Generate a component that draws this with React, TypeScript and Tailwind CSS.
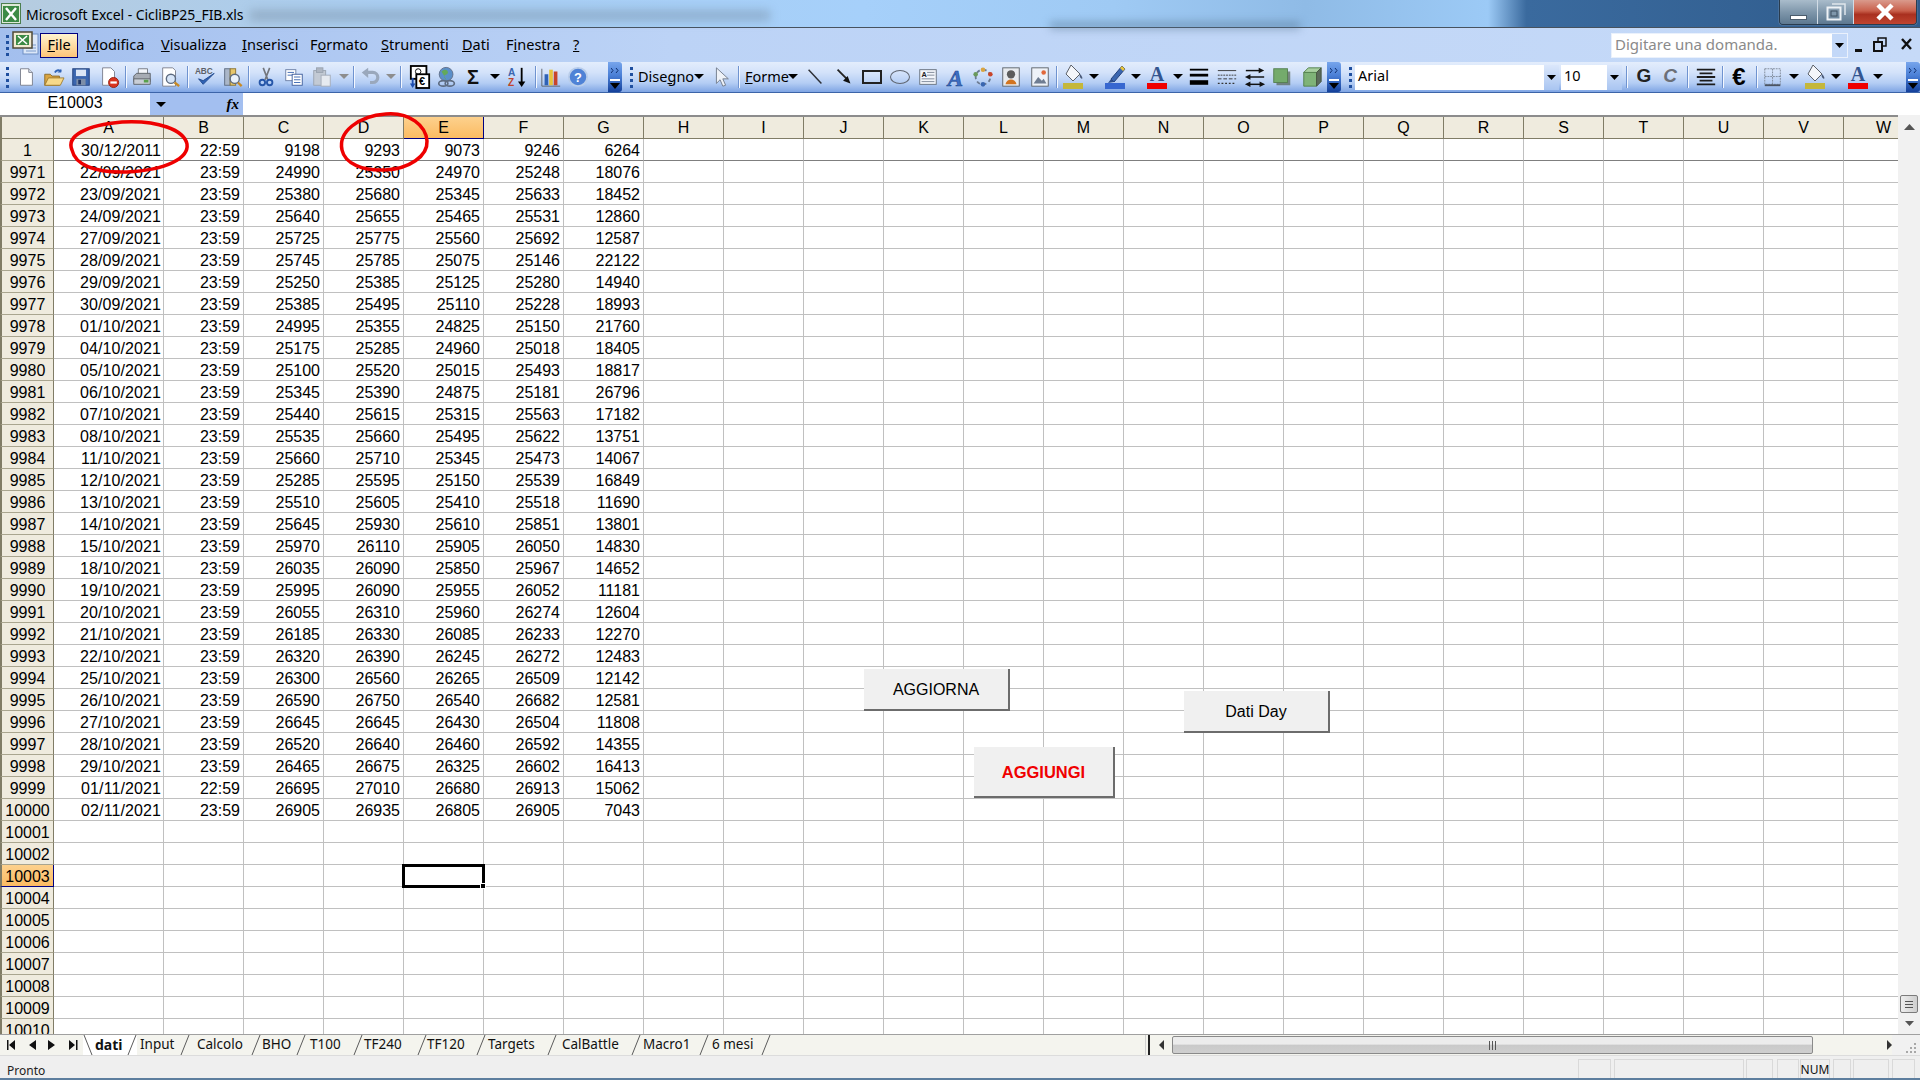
import type { ReactNode } from "react";

const ui = "font-['Noto_Sans',sans-serif]";

type Row = [string, string, string, string, string, string, string, string];

const rows: Row[] = [
  ["9971", "22/09/2021", "23:59", "24990", "25350", "24970", "25248", "18076"],
  ["9972", "23/09/2021", "23:59", "25380", "25680", "25345", "25633", "18452"],
  ["9973", "24/09/2021", "23:59", "25640", "25655", "25465", "25531", "12860"],
  ["9974", "27/09/2021", "23:59", "25725", "25775", "25560", "25692", "12587"],
  ["9975", "28/09/2021", "23:59", "25745", "25785", "25075", "25146", "22122"],
  ["9976", "29/09/2021", "23:59", "25250", "25385", "25125", "25280", "14940"],
  ["9977", "30/09/2021", "23:59", "25385", "25495", "25110", "25228", "18993"],
  ["9978", "01/10/2021", "23:59", "24995", "25355", "24825", "25150", "21760"],
  ["9979", "04/10/2021", "23:59", "25175", "25285", "24960", "25018", "18405"],
  ["9980", "05/10/2021", "23:59", "25100", "25520", "25015", "25493", "18817"],
  ["9981", "06/10/2021", "23:59", "25345", "25390", "24875", "25181", "26796"],
  ["9982", "07/10/2021", "23:59", "25440", "25615", "25315", "25563", "17182"],
  ["9983", "08/10/2021", "23:59", "25535", "25660", "25495", "25622", "13751"],
  ["9984", "11/10/2021", "23:59", "25660", "25710", "25345", "25473", "14067"],
  ["9985", "12/10/2021", "23:59", "25285", "25595", "25150", "25539", "16849"],
  ["9986", "13/10/2021", "23:59", "25510", "25605", "25410", "25518", "11690"],
  ["9987", "14/10/2021", "23:59", "25645", "25930", "25610", "25851", "13801"],
  ["9988", "15/10/2021", "23:59", "25970", "26110", "25905", "26050", "14830"],
  ["9989", "18/10/2021", "23:59", "26035", "26090", "25850", "25967", "14652"],
  ["9990", "19/10/2021", "23:59", "25995", "26090", "25955", "26052", "11181"],
  ["9991", "20/10/2021", "23:59", "26055", "26310", "25960", "26274", "12604"],
  ["9992", "21/10/2021", "23:59", "26185", "26330", "26085", "26233", "12270"],
  ["9993", "22/10/2021", "23:59", "26320", "26390", "26245", "26272", "12483"],
  ["9994", "25/10/2021", "23:59", "26300", "26560", "26265", "26509", "12142"],
  ["9995", "26/10/2021", "23:59", "26590", "26750", "26540", "26682", "12581"],
  ["9996", "27/10/2021", "23:59", "26645", "26645", "26430", "26504", "11808"],
  ["9997", "28/10/2021", "23:59", "26520", "26640", "26460", "26592", "14355"],
  ["9998", "29/10/2021", "23:59", "26465", "26675", "26325", "26602", "16413"],
  ["9999", "01/11/2021", "22:59", "26695", "27010", "26680", "26913", "15062"],
  ["10000", "02/11/2021", "23:59", "26905", "26935", "26805", "26905", "7043"],
];

const columns = "ABCDEFGHIJKLMNOPQRSTUVW".split("");
const emptyRows = ["10001", "10002", "10003", "10004", "10005", "10006", "10007", "10008", "10009", "10010"];

const menus = [
  { label: "File", u: 0, cls: "w-[38px] ml-[1px] justify-center h-[25px] border border-[#000080] bg-[linear-gradient(180deg,#fff4cf,#fdc478)]" },
  { label: "Modifica", u: 0, cls: "w-[75px] ml-[8px]" },
  { label: "Visualizza", u: 0, cls: "w-[81px]" },
  { label: "Inserisci", u: 0, cls: "w-[68px]" },
  { label: "Formato", u: 1, cls: "w-[71px]" },
  { label: "Strumenti", u: 0, cls: "w-[81px]" },
  { label: "Dati", u: 0, cls: "w-[44px]" },
  { label: "Finestra", u: 1, cls: "w-[67px]" },
  { label: "?", u: 0, cls: "w-[14px]" },
];

const tabs = [
  { label: "Input", cls: "w-[43px] pl-[3px]" },
  { label: "Calcolo", cls: "w-[61px] pl-[7px]" },
  { label: "BHO", cls: "w-[35px] pl-[1px]" },
  { label: "T100", cls: "w-[47px] pl-[4px]" },
  { label: "TF240", cls: "w-[54px] pl-[1px]" },
  { label: "TF120", cls: "w-[49px]" },
  { label: "Targets", cls: "w-[61px] pl-[2px]" },
  { label: "CalBattle", cls: "w-[74px] pl-[5px]" },
  { label: "Macro1", cls: "w-[58px] pl-[2px]" },
  { label: "6 mesi", cls: "w-[52px] pl-[3px]" },
];

const panes = [
  "w-[33px] ml-[1578px]",
  "w-[130px] ml-[3px]",
  "w-[27px] ml-[2px]",
  "w-[22px] ml-[4px]",
  "w-[30px] ml-[1px]",
  "w-[18px] ml-[3px]",
  "w-[36px] ml-[2px]",
  "w-[23px] ml-[3px]",
];

function Ico({ children, w = 22, h = 22 }: { children: ReactNode; w?: number; h?: number }) {
  return (
    <svg width={w} height={h} viewBox={`0 0 ${w === 22 ? 24 : w} ${h === 22 ? 24 : h}`} className="shrink-0 overflow-visible">
      {children}
    </svg>
  );
}

function Slot({ className, children }: { className: string; children?: ReactNode }) {
  return <div className={`flex h-full shrink-0 items-center justify-center pb-[1px] ${className}`}>{children}</div>;
}

function Sep({ className }: { className: string }) {
  return (
    <Slot className={className}>
      <div className="h-[22px] w-[2px] border-l border-r border-l-[#6f93d0] border-r-[#f4f8ff]" />
    </Slot>
  );
}

function Dd({ className, gray }: { className: string; gray?: boolean }) {
  return (
    <Slot className={className}>
      <svg width="10" height="5" viewBox="0 0 10 5">
        <path d="M0 0h10L5 5z" fill={gray ? "#8d8d8d" : "#000"} />
      </svg>
    </Slot>
  );
}

function Grip() {
  return (
    <div className="flex h-full w-[10px] shrink-0 flex-col items-center justify-center gap-[3px]">
      <div className="h-[3px] w-[3px] bg-[#1f4f9f]" />
      <div className="h-[3px] w-[3px] bg-[#1f4f9f]" />
      <div className="h-[3px] w-[3px] bg-[#1f4f9f]" />
      <div className="h-[3px] w-[3px] bg-[#1f4f9f]" />
    </div>
  );
}

function Chevron({ className = "" }: { className?: string }) {
  return (
    <div className={`flex h-full w-[14px] shrink-0 flex-col items-center rounded-r-[3px] bg-[linear-gradient(180deg,#77a5ec,#4a7fd6_45%,#14409a)] pt-[6px] ${className}`}>
      <svg width="9" height="5" viewBox="0 0 9 5">
        <path d="M0 0l2 2.5L0 5M5 0l2 2.5L5 5" stroke="#10306f" fill="none" />
      </svg>
      <div className="mt-[6px] h-[2px] w-[10px] bg-white" />
      <svg width="10" height="6" viewBox="0 0 10 6" className="mt-[2px]">
        <path d="M0 0h10L5 6z" fill="#000" />
      </svg>
    </div>
  );
}

function NewDoc() {
  return (
    <Ico>
      <path d="M6 3h9l4 4v14H6z" fill="#fff" stroke="#7b7f8c" />
      <path d="M15 3v4h4" fill="#dde4ee" stroke="#7b7f8c" />
    </Ico>
  );
}
function OpenFolder() {
  return (
    <Ico>
      <path d="M3 9h6l2 2h8v10H3z" fill="#d9a441" stroke="#8c6a26" />
      <path d="M3 21l4-8h17l-4 8z" fill="#f7d98a" stroke="#a07d30" />
      <path d="M14 7c2-3 5-3 7-1" stroke="#2f62b5" strokeWidth="2" fill="none" />
      <path d="M21 3v4h-4" fill="#2f62b5" />
    </Ico>
  );
}
function Save() {
  return (
    <Ico>
      <rect x="3" y="3" width="18" height="18" fill="#3b66ae" stroke="#24427c" />
      <rect x="6.5" y="4" width="11" height="7" fill="#dce6f5" />
      <rect x="7" y="14" width="10" height="7" fill="#7d8ea8" />
      <rect x="9" y="15" width="3" height="5" fill="#1f3564" />
    </Ico>
  );
}
function PermDoc() {
  return (
    <Ico>
      <path d="M5 2h9l4 4v15H5z" fill="#fff" stroke="#7b7f8c" />
      <circle cx="17" cy="18" r="5.5" fill="#d9341f" stroke="#96200f" />
      <rect x="13.5" y="16.8" width="7" height="2.4" fill="#fff" />
    </Ico>
  );
}
function Printer() {
  return (
    <Ico>
      <path d="M8 3h10v7H8z" fill="#f4f6fa" stroke="#72777f" />
      <path d="M3 11l3-3h15v9H3z" fill="#a7acb4" stroke="#5c6168" />
      <path d="M3 14h18v6H3z" fill="#c9ced6" stroke="#5c6168" />
      <rect x="14" y="15" width="5" height="3" fill="#58a04c" />
    </Ico>
  );
}
function Preview() {
  return (
    <Ico>
      <path d="M4 2h11l3 3v17H4z" fill="#fff" stroke="#7b7f8c" />
      <circle cx="13" cy="14" r="5" fill="#d8e6f8" stroke="#5d6b80" strokeWidth="1.5" />
      <path d="M17 18l5 4" stroke="#c98a24" strokeWidth="2.5" />
    </Ico>
  );
}
function Spell() {
  return (
    <Ico>
      <text x="1" y="9" fontSize="9" fontWeight="700" fill="#5c6168" fontFamily="Liberation Sans">ABC</text>
      <path d="M5 14l5 6L22 8l-12 8z" fill="#2f62b5" stroke="#1e468c" strokeWidth="1" />
    </Ico>
  );
}
function Research() {
  return (
    <Ico>
      <rect x="4" y="3" width="6" height="18" fill="#aab6c8" stroke="#5d6b80" />
      <rect x="10" y="3" width="6" height="18" fill="#e6c66c" stroke="#8c7430" />
      <circle cx="15" cy="14" r="5" fill="#eaf2fc" stroke="#5d6b80" strokeWidth="1.5" />
      <path d="M18.5 18l4 4" stroke="#c98a24" strokeWidth="2.5" />
    </Ico>
  );
}
function Cut() {
  return (
    <Ico>
      <path d="M9 2l5 13M16 2l-5 13" stroke="#73767c" strokeWidth="1.8" />
      <circle cx="8" cy="18" r="3" fill="none" stroke="#2656a8" strokeWidth="2" />
      <circle cx="16" cy="18" r="3" fill="none" stroke="#2656a8" strokeWidth="2" />
    </Ico>
  );
}
function Copy() {
  return (
    <Ico>
      <rect x="3" y="4" width="11" height="12" fill="#fff" stroke="#6b7fa6" />
      <path d="M5 7h7M5 10h7" stroke="#3a66b0" />
      <rect x="10" y="9" width="11" height="12" fill="#fff" stroke="#3f5e9c" />
      <path d="M12 12h7M12 15h7M12 18h7" stroke="#3a66b0" />
    </Ico>
  );
}
function Paste() {
  return (
    <Ico>
      <rect x="3" y="5" width="13" height="16" fill="#c3cad4" stroke="#9aa3b0" />
      <rect x="6" y="2" width="7" height="5" fill="#aeb6c2" stroke="#9aa3b0" />
      <rect x="11" y="10" width="10" height="12" fill="#e6eaf0" stroke="#a5adb9" />
    </Ico>
  );
}
function Undo() {
  return (
    <Ico>
      <path d="M9 7h6a5 5 0 0 1 0 11h-3" stroke="#9aa8bc" strokeWidth="3.500" fill="none" />
      <path d="M10 2v11L3 7z" fill="#9aa8bc" />
    </Ico>
  );
}
function EuroConv() {
  return (
    <Ico w={22} h={26}>
      <rect x="2" y="1" width="17" height="14" fill="#fff" stroke="#000" strokeWidth="2" />
      <circle cx="10" cy="7" r="3" fill="none" stroke="#000" />
      <rect x="8" y="10" width="14" height="15" fill="#fff" stroke="#000" strokeWidth="2" />
      <text x="11" y="22" fontSize="12" fontWeight="700" fill="#000" fontFamily="Liberation Sans">€</text>
      <path d="M4 14v9" stroke="#1f4fb0" strokeWidth="2" />
      <path d="M1 20h6l-3 5z" fill="#1f4fb0" />
    </Ico>
  );
}
function Link() {
  return (
    <Ico>
      <circle cx="11" cy="9" r="7.5" fill="#5b8fc9" stroke="#627089" />
      <path d="M6 6c3-3 7-2 7 1s-5 2-4 5 3 3 3 4" fill="#63a95a" />
      <ellipse cx="8" cy="19" rx="5" ry="3" fill="none" stroke="#5d6b80" strokeWidth="1.8" />
      <ellipse cx="15" cy="19" rx="5" ry="3" fill="none" stroke="#5d6b80" strokeWidth="1.8" />
    </Ico>
  );
}
function Sort() {
  return (
    <Ico>
      <text x="1" y="11" fontSize="11" fontWeight="700" fill="#3a66b0" fontFamily="Liberation Sans">A</text>
      <text x="1" y="22" fontSize="11" fontWeight="700" fill="#c0452b" fontFamily="Liberation Sans">Z</text>
      <path d="M16 2v16" stroke="#000" strokeWidth="2" />
      <path d="M12 17h8l-4 6z" fill="#000" />
    </Ico>
  );
}
function Chart() {
  return (
    <Ico>
      <path d="M2 3v19h20" fill="none" stroke="#5c6168" />
      <rect x="5" y="9" width="4" height="12" fill="#2f62b5" />
      <rect x="10" y="4" width="4" height="17" fill="#e8c33c" />
      <rect x="15" y="6" width="4" height="15" fill="#c8452a" />
    </Ico>
  );
}
function Help() {
  return (
    <Ico>
      <circle cx="12" cy="12" r="10" fill="#4f82d6" stroke="#b9cdea" strokeWidth="2" />
      <text x="12" y="17" fontSize="14" fontWeight="700" fill="#fff" textAnchor="middle" fontFamily="Liberation Sans">?</text>
    </Ico>
  );
}
function Cursor() {
  return (
    <Ico>
      <path d="M7 2v17l4-4 3 7 3-1-3-7h6z" fill="#eef2f8" stroke="#707a8a" />
    </Ico>
  );
}
function LineIco() {
  return (
    <Ico>
      <path d="M5 4l14 15" stroke="#2c2f35" strokeWidth="1.6" />
    </Ico>
  );
}
function ArrowIco() {
  return (
    <Ico>
      <path d="M5 4l10 10" stroke="#222" strokeWidth="2" />
      <path d="M19 19l-8-3 5-5z" fill="#111" />
    </Ico>
  );
}
function TextBox() {
  return (
    <Ico>
      <rect x="3" y="4" width="18" height="16" fill="#f2f5fa" stroke="#66707e" />
      <text x="5" y="12" fontSize="8" fontWeight="700" fill="#222" fontFamily="Liberation Sans">A</text>
      <path d="M11 7h8M11 10h8M5 14h14M5 17h14" stroke="#7d8796" />
    </Ico>
  );
}
function WordArt() {
  return (
    <Ico>
      <text x="2" y="22" fontSize="25" fontWeight="700" fontStyle="italic" fill="#3d6fc4" stroke="#1e468c" strokeWidth="0.6" fontFamily="Liberation Serif">A</text>
    </Ico>
  );
}
function Diagram() {
  return (
    <Ico>
      <path d="M12 4a8 8 0 1 1-.1 0" fill="none" stroke="#6b7a90" strokeWidth="2" strokeDasharray="4 3" />
      <circle cx="12" cy="4" r="2.500" fill="#d9a441" />
      <circle cx="20" cy="9" r="2.500" fill="#c8452a" />
      <circle cx="12" cy="20" r="2.500" fill="#3a66b0" />
      <circle cx="4" cy="9" r="2.500" fill="#6a9a5c" />
    </Ico>
  );
}
function ClipArt() {
  return (
    <Ico>
      <rect x="3" y="2" width="18" height="20" fill="#e8ebef" stroke="#5c6168" />
      <circle cx="12" cy="9" r="4.500" fill="#5c5c5c" />
      <path d="M6 20c1-7 11-7 12 0z" fill="#d2741f" />
    </Ico>
  );
}
function PictureIco() {
  return (
    <Ico>
      <rect x="3" y="2" width="18" height="20" fill="#eef2f8" stroke="#5c6168" />
      <path d="M5 19l5-7 4 4 2-2 3 5z" fill="#6f7d92" />
      <circle cx="16" cy="7" r="2.500" fill="#e2683a" />
    </Ico>
  );
}
function Fill() {
  return (
    <Ico w={24} h={26}>
      <path d="M10 1l9 9-7 7-7-7z" fill="#f4f6fa" stroke="#5c6168" />
      <path d="M19 10c2 2 3 4 2 5-2-1-3-3-2-5z" fill="#4a5a78" />
      <rect x="2" y="19" width="20" height="6" fill="#c4b73c" />
    </Ico>
  );
}
function Pen() {
  return (
    <Ico w={24} h={26}>
      <path d="M8 15L19 2l3 3L11 18z" fill="#3a66b0" stroke="#24427c" />
      <path d="M19 2l3 3-2 2-3-3z" fill="#e8c33c" />
      <path d="M8 15l3 3-6 1z" fill="#2f4f8c" />
      <rect x="2" y="19" width="20" height="6" fill="#3767d0" />
    </Ico>
  );
}
function FontColor() {
  return (
    <Ico w={24} h={26}>
      <text x="12" y="17" fontSize="20" fontWeight="700" fill="#33558f" textAnchor="middle" fontFamily="Liberation Serif">A</text>
      <rect x="2" y="19" width="20" height="6" fill="#f00000" />
    </Ico>
  );
}
function Lines() {
  return (
    <Ico>
      <path d="M2 4h20" stroke="#000" strokeWidth="2" />
      <path d="M2 10h20" stroke="#000" strokeWidth="3" />
      <path d="M2 18h20" stroke="#000" strokeWidth="5" />
    </Ico>
  );
}
function Dashes() {
  return (
    <Ico>
      <path d="M2 5h20" stroke="#333" />
      <path d="M2 10h20" stroke="#333" strokeDasharray="2 1" />
      <path d="M2 14h20" stroke="#333" strokeDasharray="4 2" />
      <path d="M2 19h20" stroke="#333" strokeWidth="1.5" strokeDasharray="2 2" />
    </Ico>
  );
}
function Arrows() {
  return (
    <Ico>
      <path d="M2 5h16" stroke="#111" strokeWidth="1.6" />
      <path d="M22 5l-6-3v6z" fill="#111" />
      <path d="M4 12h18" stroke="#111" strokeWidth="1.6" />
      <path d="M1 12l6-3v6z" fill="#111" />
      <path d="M5 20h14" stroke="#111" strokeWidth="1.6" />
      <path d="M1 20l6-3v6zM23 20l-6-3v6z" fill="#111" />
    </Ico>
  );
}
function Shadow() {
  return (
    <Ico>
      <rect x="6" y="6" width="15" height="15" fill="#5b6a5b" opacity="0.75" />
      <rect x="3" y="3" width="15" height="15" fill="#74ab6c" stroke="#557f50" />
    </Ico>
  );
}
function Cube() {
  return (
    <Ico>
      <path d="M3 7h14v15H3z" fill="#7fb378" stroke="#51804c" />
      <path d="M3 7l5-5h14l-5 5z" fill="#a8cfa0" stroke="#51804c" />
      <path d="M17 7l5-5v15l-5 5z" fill="#5b6a5b" stroke="#45543f" />
    </Ico>
  );
}
function BoldG() {
  return <span className="font-['Liberation_Sans',sans-serif] text-[19px] font-bold text-[#222]">G</span>;
}
function ItalicC() {
  return <span className="font-['Liberation_Sans',sans-serif] text-[19px] font-bold italic text-[#6b6f78]">C</span>;
}
function Align() {
  return (
    <Ico>
      <path d="M2 4h20M5 8h14M2 12h20M5 16h14M2 20h20" stroke="#1c1c1c" strokeWidth="2" />
    </Ico>
  );
}
function Euro() {
  return <span className="font-['Liberation_Sans',sans-serif] text-[24px] font-bold leading-none text-black">€</span>;
}
function Borders() {
  return (
    <Ico>
      <rect x="3" y="3" width="17" height="17" fill="none" stroke="#7d8796" strokeDasharray="2 1" />
      <path d="M11.5 3v17M3 11.5h17" stroke="#7d8796" strokeDasharray="2 1" />
      <path d="M3 21h17" stroke="#4b5462" strokeWidth="2" />
    </Ico>
  );
}

function MainToolbar() {
  return (
    <div className="ml-[2px] flex h-full w-[620px] shrink-0 rounded-l-[3px]">
      <Grip />
      <Slot className="w-[27px]"><NewDoc /></Slot>
      <Slot className="w-[28px]"><OpenFolder /></Slot>
      <Slot className="w-[27px]"><Save /></Slot>
      <Slot className="w-[30px]"><PermDoc /></Slot>
      <Sep className="w-[4px]" />
      <Slot className="w-[28px]"><Printer /></Slot>
      <Slot className="w-[28px]"><Preview /></Slot>
      <Sep className="w-[8px]" />
      <Slot className="w-[26px]"><Spell /></Slot>
      <Slot className="w-[28px]"><Research /></Slot>
      <Sep className="w-[6px]" />
      <Slot className="w-[28px]"><Cut /></Slot>
      <Slot className="w-[28px]"><Copy /></Slot>
      <Slot className="w-[28px]"><Paste /></Slot>
      <Dd className="w-[16px]" gray />
      <Sep className="w-[4px]" />
      <Slot className="w-[28px]"><Undo /></Slot>
      <Dd className="w-[14px]" gray />
      <Sep className="w-[6px]" />
      <Slot className="w-[32px]"><EuroConv /></Slot>
      <Slot className="w-[22px]"><Link /></Slot>
      <Slot className="w-[30px] font-['Liberation_Sans',sans-serif] text-[20px] font-bold text-[#111]">Σ</Slot>
      <Dd className="w-[14px]" />
      <Slot className="w-[32px]"><Sort /></Slot>
      <Sep className="w-[4px]" />
      <Slot className="w-[26px]"><Chart /></Slot>
      <Slot className="w-[28px]"><Help /></Slot>
      <div className="w-[16px] shrink-0" />
      <Chevron />
    </div>
  );
}

function DrawToolbar() {
  return (
    <div className={`ml-[4px] flex h-full w-[715px] shrink-0 rounded-l-[3px] ${ui}`}>
      <Grip />
      <Slot className="w-[58px] justify-start pl-[2px] text-[14.5px] text-black">
        <span>Dise<span className="underline">g</span>no</span>
      </Slot>
      <Dd className="w-[10px]" />
      <Slot className="w-[33px]"><Cursor /></Slot>
      <Sep className="w-[3px]" />
      <Slot className="w-[47px] justify-start pl-[5px] text-[14.5px] text-black">
        <span><span className="underline">F</span>orme</span>
      </Slot>
      <Dd className="w-[12px]" />
      <Slot className="w-[32px]"><LineIco /></Slot>
      <Slot className="w-[26px]"><ArrowIco /></Slot>
      <Slot className="w-[30px]"><div className="h-[14px] w-[20px] border-2 border-[#222] bg-white/10" /></Slot>
      <Slot className="w-[26px]"><div className="h-[14px] w-[20px] rounded-[50%] border-[1.5px] border-[#5f6570]" /></Slot>
      <Slot className="w-[30px]"><TextBox /></Slot>
      <Slot className="w-[27px]"><WordArt /></Slot>
      <Slot className="w-[26px]"><Diagram /></Slot>
      <Slot className="w-[30px]"><ClipArt /></Slot>
      <Slot className="w-[28px]"><PictureIco /></Slot>
      <Sep className="w-[6px]" />
      <Slot className="w-[26px]"><Fill /></Slot>
      <Dd className="w-[16px]" />
      <Slot className="w-[26px]"><Pen /></Slot>
      <Dd className="w-[16px]" />
      <Slot className="w-[26px]"><FontColor /></Slot>
      <Dd className="w-[16px]" />
      <Slot className="w-[26px]"><Lines /></Slot>
      <Slot className="w-[30px]"><Dashes /></Slot>
      <Slot className="w-[26px]"><Arrows /></Slot>
      <Slot className="w-[28px]"><Shadow /></Slot>
      <Slot className="w-[31px]"><Cube /></Slot>
      <Chevron />
    </div>
  );
}

function Combo({ className, children }: { className: string; children: ReactNode }) {
  return (
    <div className={`flex h-[25px] shrink-0 items-center bg-white ${className}`}>
      <span className="flex-1 pb-[3px] pl-[3px] text-[14.5px] text-black">{children}</span>
      <div className="flex h-full w-[15px] items-center justify-center bg-[linear-gradient(180deg,#dbe7fb,#a9c5f1)]">
        <svg width="9" height="5" viewBox="0 0 9 5">
          <path d="M0 0h9L4.5 5z" fill="#000" />
        </svg>
      </div>
    </div>
  );
}

function FormatToolbar() {
  return (
    <div className={`ml-[4px] flex h-full flex-1 items-center rounded-l-[3px] ${ui}`}>
      <Grip />
      <Combo className="w-[204px]">Arial</Combo>
      <Combo className="ml-[2px] w-[61px]">10</Combo>
      <Sep className="w-[10px]" />
      <Slot className="w-[24px]"><BoldG /></Slot>
      <Slot className="w-[28px]"><ItalicC /></Slot>
      <Sep className="w-[8px]" />
      <Slot className="w-[28px]"><Align /></Slot>
      <Sep className="w-[6px]" />
      <Slot className="w-[26px]"><Euro /></Slot>
      <Sep className="w-[10px]" />
      <Slot className="w-[22px]"><Borders /></Slot>
      <Dd className="w-[20px]" />
      <Slot className="w-[22px]"><Fill /></Slot>
      <Dd className="w-[20px]" />
      <Slot className="w-[24px]"><FontColor /></Slot>
      <Dd className="w-[16px]" />
      <div className="flex-1" />
      <Chevron />
    </div>
  );
}

function TitleBar() {
  return (
    <div className="relative flex h-[28px] shrink-0 items-center border-b border-[#47525e] bg-[linear-gradient(90deg,#b6ccdf_0,#a9cdf0_20%,#a6d0fa_45%,#9fcaf4_58%,#8fbbe6_68%,#9ccaf6_77.5%,#3a6a9e_79.5%,#2f5b8b_100%)]">
      <div className="absolute left-[250px] top-[10px] h-[11px] w-[520px] bg-[#6f8397]/40 blur-[5px]" />
      <div className="absolute left-[1050px] top-[22px] h-[7px] w-[250px] bg-[#4f6f8c]/50 blur-[4px]" />
      <div className="relative ml-[1px] flex h-[21px] w-[20px] items-center justify-center border border-[#4c7f4f] bg-[#dfe9d8]">
        <svg width="16" height="16" viewBox="0 0 16 16">
          <rect width="16" height="16" fill="#3c8a45" />
          <path d="M3 2l10 12M13 2L3 14" stroke="#fff" strokeWidth="2.400" />
        </svg>
      </div>
      <span className={`relative ml-[5px] pt-[1px] text-[14px] tracking-[-0.05px] text-black ${ui}`}>Microsoft Excel - CicliBP25_FIB.xls</span>
      <div className="absolute right-[3px] top-0 flex h-[25px] w-[138px] overflow-hidden rounded-b-[4px] border border-t-0 border-[#2a3c4e] shadow-[0_0_1px_#fff]">
        <div className="flex w-[38px] items-end justify-center border-r border-[#d2dce6] bg-[linear-gradient(180deg,#a9bccb,#7f97ab_50%,#5d7890)] pb-[4px]">
          <div className="h-[5px] w-[17px] border border-[#4b5c6c] bg-white" />
        </div>
        <div className="flex w-[36px] items-center justify-center border-r border-[#d2dce6] bg-[linear-gradient(180deg,#a9bccb,#7f97ab_50%,#5d7890)]">
          <svg width="20" height="18" viewBox="0 0 20 18">
            <path d="M6 1h13v11" fill="none" stroke="#dfe6ec" strokeWidth="1.5" />
            <rect x="1.5" y="4.5" width="13" height="12" fill="none" stroke="#eef2f6" strokeWidth="2" />
            <rect x="5" y="8" width="6" height="5" fill="#7f97ab" stroke="#3d4f60" />
          </svg>
        </div>
        <div className="flex flex-1 items-center justify-center bg-[linear-gradient(180deg,#d99a8c,#c9604c_45%,#a9301f_60%,#c0442f)]">
          <svg width="24" height="18" viewBox="0 0 24 18">
            <path d="M5 2l14 14M19 2L5 16" stroke="#fff" strokeWidth="4.500" />
          </svg>
        </div>
      </div>
    </div>
  );
}

function MenuBar() {
  return (
    <div className={`flex h-[34px] shrink-0 items-center bg-[linear-gradient(90deg,#a3bfee,#bcd3f6_35%,#c6daf8)] ${ui}`}>
      <div className="ml-[2px]"><Grip /></div>
      <div className="mt-[-4px] h-[24px] w-[27px] shrink-0">
        <svg width="28" height="24" viewBox="0 0 28 24">
          <rect x="11" y="3" width="15" height="20" fill="#dbe7f8" stroke="#6f8fc4" />
          <path d="M14 14h10M14 17h10M14 20h10" stroke="#7d9ccc" />
          <rect x="1" y="1" width="19" height="16" fill="#f1ead2" stroke="#4f4a36" strokeWidth="1.5" />
          <rect x="4" y="4" width="13" height="10" fill="#3c8a45" />
          <path d="M6 5l9 8M15 5l-9 8" stroke="#fff" strokeWidth="1.6" />
        </svg>
      </div>
      {menus.map((m) => (
        <div key={m.label} className={`flex shrink-0 items-center text-[14.5px] text-black ${m.cls}`}>
          <span>
            {m.label.slice(0, m.u)}
            <span className="underline">{m.label.slice(m.u, m.u + 1)}</span>
            {m.label.slice(m.u + 1)}
          </span>
        </div>
      ))}
      <div className="flex-1" />
      <div className="flex h-[25px] w-[237px] shrink-0 items-center border border-[#eaf1fc] bg-white">
        <span className="flex-1 pb-[2px] pl-[3px] text-[15px] text-[#8a8a8a]">Digitare una domanda.</span>
        <div className="flex h-full w-[15px] items-center justify-center bg-[#c3d8f8]">
          <svg width="9" height="5" viewBox="0 0 9 5">
            <path d="M0 0h9L4.5 5z" fill="#000" />
          </svg>
        </div>
      </div>
      <div className="flex w-[72px] shrink-0 items-center">
        <svg width="72" height="24" viewBox="0 0 72 24">
          <rect x="7" y="16" width="7" height="3" fill="#111" />
          <rect x="30" y="5" width="8" height="8" fill="none" stroke="#111" strokeWidth="1.5" />
          <rect x="26" y="9" width="8" height="9" fill="#c6daf8" stroke="#111" strokeWidth="2" />
          <path d="M54 6l9 10M63 6l-9 10" stroke="#111" strokeWidth="2.400" />
        </svg>
      </div>
    </div>
  );
}

function FormulaBar() {
  return (
    <div className="flex h-[22px] shrink-0 bg-white font-['Liberation_Sans',sans-serif]">
      <div className="flex w-[150px] shrink-0 items-center justify-center pb-[2px] text-[16px] text-black">E10003</div>
      <div className="flex w-[93px] shrink-0 items-center bg-[#a3bff0]">
        <svg width="10" height="5" viewBox="0 0 10 5" className="ml-[6px]">
          <path d="M0 0h10L5 5z" fill="#000" />
        </svg>
        <span className="ml-auto mr-[4px] font-['Liberation_Serif',serif] text-[15px] font-bold italic text-black">fx</span>
      </div>
    </div>
  );
}

function HeaderCell({ label, wide, active }: { label: string; wide?: boolean; active?: boolean }) {
  return (
    <div
      className={`flex h-full shrink-0 items-center justify-center border-r ${wide ? "w-[110px]" : "w-[80px]"} ${
        active
          ? "border-b border-b-[#000080] border-r-[#000080] bg-[linear-gradient(180deg,#fdd18d,#fbbb62)]"
          : "border-b border-[#807c66] bg-[#efebde]"
      }`}
    >
      {label}
    </div>
  );
}

function SheetRow({ label, values, first, active }: { label: string; values: string[]; first?: boolean; active?: boolean }) {
  return (
    <div className="flex h-[22px]">
      <div
        className={`flex h-full w-[54px] shrink-0 items-center justify-center border-r border-b border-l-2 border-l-[#807c66] pt-[2px] ${
          active
            ? "border-b-[#000080] border-r-[#000080] bg-[linear-gradient(180deg,#fdd18d,#fbbb62)]"
            : "border-b-[#a9a58f] border-r-[#807c66] bg-[#efebde]"
        }`}
      >
        {label}
      </div>
      {columns.map((c, i) => (
        <div
          key={c}
          className={`flex h-full shrink-0 items-center justify-end border-r border-b border-r-[#c0c0c0] pt-[2px] ${
            i === 0 ? "w-[110px] pr-[2px] tracking-[0.1px]" : "w-[80px] pr-[3px]"
          } ${first ? "border-b-[#7f7f7f]" : "border-b-[#c0c0c0]"}`}
        >
          {values[i] ?? ""}
        </div>
      ))}
    </div>
  );
}

function SheetButton({ className, children }: { className: string; children: ReactNode }) {
  return (
    <div className={`absolute flex items-center justify-center border-r-2 border-b-2 border-[#6c6c6c] bg-[#f0f0f0] pt-[2px] ${className}`}>
      {children}
    </div>
  );
}

function Sheet() {
  return (
    <div className="relative h-full w-[1898px] shrink-0 overflow-hidden border-t-2 border-[#8c8c8c] font-['Liberation_Sans',sans-serif] text-[16px] text-black">
      <div className="flex h-[22px]">
        <div className="h-full w-[54px] shrink-0 border-r border-b border-l-2 border-[#807c66] bg-[#efebde]" />
        {columns.map((c, i) => (
          <HeaderCell key={c} label={c} wide={i === 0} active={c === "E"} />
        ))}
      </div>
      <SheetRow label="1" values={["30/12/2011", "22:59", "9198", "9293", "9073", "9246", "6264"]} first />
      {rows.map((r) => (
        <SheetRow key={r[0]} label={r[0]} values={r.slice(1)} />
      ))}
      {emptyRows.map((label) => (
        <SheetRow key={label} label={label} values={[]} active={label === "10003"} />
      ))}

      <div className="absolute left-[402px] top-[747px] h-[24px] w-[83px] border-[3px] border-black">
        <div className="absolute -bottom-[4px] -right-[4px] h-[6px] w-[6px] border border-white bg-black" />
      </div>

      <SheetButton className="left-[864px] top-[552px] h-[42px] w-[146px]">AGGIORNA</SheetButton>
      <SheetButton className="left-[1184px] top-[574px] h-[42px] w-[146px]">Dati Day</SheetButton>
      <SheetButton className="left-[974px] top-[630px] h-[51px] w-[141px] text-[16.5px] font-bold text-[#f00000]">AGGIUNGI</SheetButton>
    </div>
  );
}

function VScroll() {
  return (
    <div className="flex h-full w-[22px] shrink-0 flex-col items-center bg-[#f1f1f1] pt-[1px]">
      <div className="flex h-[21px] items-center">
        <svg width="11" height="6" viewBox="0 0 11 6">
          <path d="M0 6h11L5.500 0z" fill="#555" />
        </svg>
      </div>
      <div className="flex-1" />
      <div className="flex h-[18px] w-[18px] flex-col items-center justify-center gap-[2px] rounded-[2px] border border-[#7b7b7b] bg-[linear-gradient(90deg,#ededed,#cfcfcf)]">
        <div className="h-px w-[8px] bg-[#555]" />
        <div className="h-px w-[8px] bg-[#555]" />
        <div className="h-px w-[8px] bg-[#555]" />
      </div>
      <div className="flex h-[21px] items-center">
        <svg width="9" height="5" viewBox="0 0 9 5">
          <path d="M0 0h9L4.500 5z" fill="#555" />
        </svg>
      </div>
    </div>
  );
}

function Slash({ back }: { back?: boolean }) {
  return (
    <svg width="10" height="21" viewBox="0 0 10 21" className="shrink-0">
      <path d={back ? "M1 0l8 20" : "M9 0L1 20"} stroke="#5b5b5b" fill="none" />
    </svg>
  );
}

function TabStrip() {
  return (
    <div className="flex h-[21px] shrink-0 border-t border-[#a0a0a0] bg-[#f4f4ee] text-[#111]">
      <div className="flex w-[83px] shrink-0 items-center">
        <svg width="83" height="20" viewBox="0 0 83 20">
          <path d="M7 5h1.500v10H7zM15 5v10l-6-5zM36 5v10l-7-5zM48 5v10l7-5zM69 5v10l6-5zM76 5h1.500v10H76z" fill="#111" />
        </svg>
      </div>
      <div className="flex h-full shrink-0 items-center bg-white">
        <Slash back />
        <div className={`w-[34px] pl-[2px] text-[14px] font-bold leading-none ${ui}`}>dati</div>
        <Slash />
      </div>
      {tabs.map((t) => (
        <div key={t.label} className={`flex h-full shrink-0 items-center ${ui}`}>
          <div className={`whitespace-nowrap text-[13.5px] leading-none ${t.cls}`}>{t.label}</div>
          <Slash />
        </div>
      ))}
      <div className="ml-[374px] h-full w-[5px] shrink-0 border-l border-r-2 border-l-[#d0d0d0] border-r-[#222]" />
      <div className="flex w-[22px] shrink-0 items-center justify-center">
        <svg width="5" height="10" viewBox="0 0 5 10">
          <path d="M5 0v10L0 5z" fill="#333" />
        </svg>
      </div>
      <div className="my-[1px] flex w-[641px] shrink-0 items-center justify-center gap-[2px] rounded-[2px] border border-[#8a8a8a] bg-[linear-gradient(180deg,#ececec_45%,#c9c9c9_50%,#cfcfcf)]">
        <div className="h-[9px] w-px bg-[#555]" />
        <div className="h-[9px] w-px bg-[#555]" />
        <div className="h-[9px] w-px bg-[#555]" />
      </div>
      <div className="flex w-[79px] shrink-0 items-center justify-end">
        <svg width="5" height="10" viewBox="0 0 5 10">
          <path d="M0 0v10l5-5z" fill="#333" />
        </svg>
      </div>
      <div className="flex flex-1 items-end justify-end bg-[#f1f1f1] pb-[2px] pr-[4px]">
        <svg width="10" height="10" viewBox="0 0 10 10">
          <path d="M8 0h2v2H8zM4 4h2v2H4zM8 4h2v2H8zM0 8h2v2H0zM4 8h2v2H4zM8 8h2v2H8z" fill="#a8a8a8" />
        </svg>
      </div>
    </div>
  );
}

function StatusBar() {
  return (
    <div className={`relative flex h-[23px] shrink-0 items-end border-t border-[#dcdcdc] bg-[#efefef] ${ui}`}>
      <span className="absolute left-[7px] top-[9px] text-[12px] leading-none text-[#222]">Pronto</span>
      {panes.map((p, i) => (
        <div key={p} className={`flex h-[19px] shrink-0 items-center justify-center border border-b-0 border-[#d9d9d9] pt-[1px] text-[12px] text-[#111] ${p}`}>
          {i === 4 ? "NUM" : ""}
        </div>
      ))}
    </div>
  );
}

export default function App() {
  return (
    <div className="relative flex h-[1080px] w-[1920px] flex-col overflow-hidden bg-white">
      <TitleBar />
      <MenuBar />
      <div className="flex h-[31px] shrink-0 items-stretch border-b border-[#3c64a8] bg-[linear-gradient(180deg,#e3edfc,#d3e2fa_35%,#b4cdf4_70%,#7fa5e4)]">
        <MainToolbar />
        <DrawToolbar />
        <FormatToolbar />
      </div>
      <FormulaBar />
      <div className="flex h-[919px] shrink-0">
        <Sheet />
        <VScroll />
      </div>
      <TabStrip />
      <StatusBar />
      <div className="h-[2px] shrink-0 bg-[#5d7e9e]" />

      <svg width="1920" height="1080" viewBox="0 0 1920 1080" className="pointer-events-none absolute left-0 top-0">
        <path
          d="M72 150c-6-14 14-25 50-28 36-2 62 8 65 22 2 14-20 26-60 28-34 1-52-8-55-22z"
          fill="none"
          stroke="#ee0000"
          strokeWidth="3.500"
        />
        <path
          d="M342 150c-4-18 16-34 44-36 24-2 40 12 41 27 1 15-18 28-42 29-22 1-40-6-43-20z"
          fill="none"
          stroke="#ee0000"
          strokeWidth="3.500"
        />
      </svg>
    </div>
  );
}
